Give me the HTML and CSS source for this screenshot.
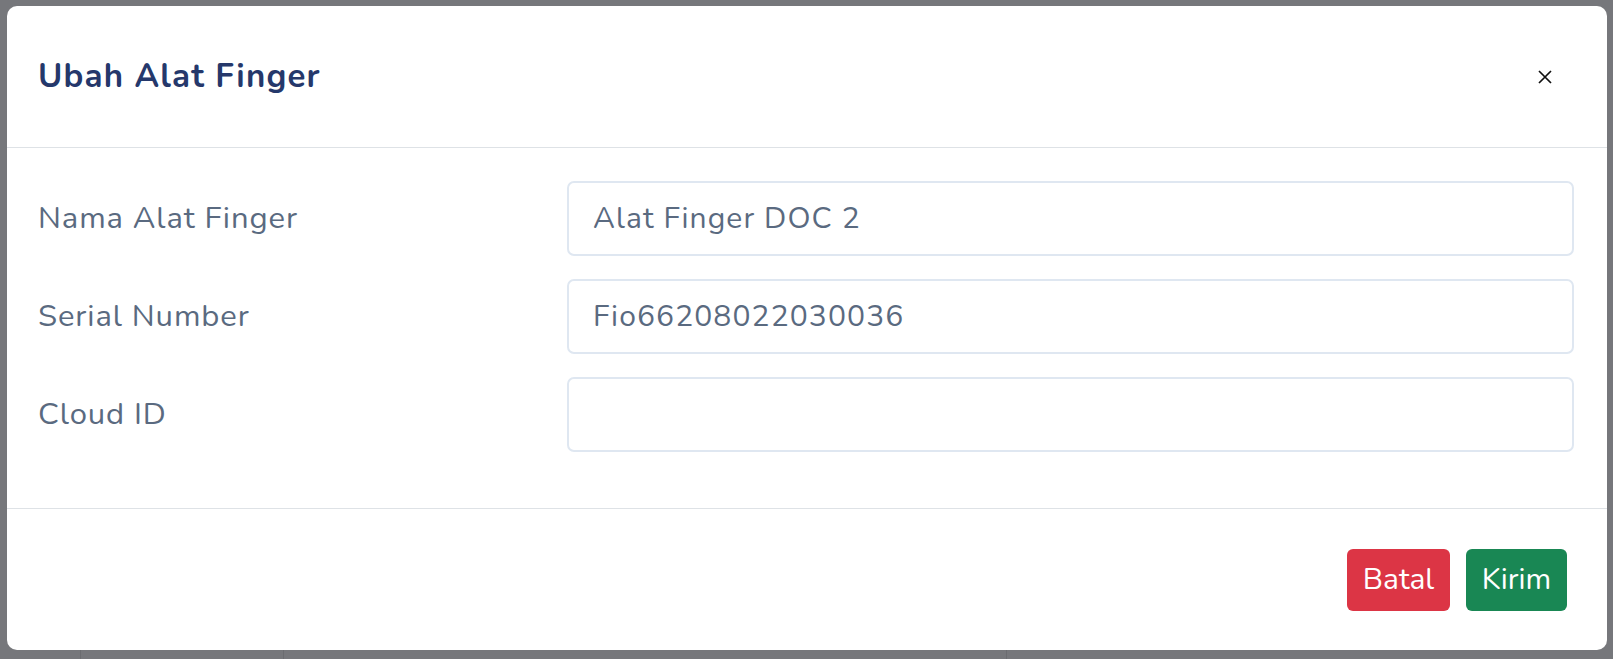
FILE: index.html
```html
<!DOCTYPE html>
<html lang="id">
<head>
<meta charset="utf-8">
<title>Ubah Alat Finger</title>
<link rel="stylesheet" href="styles.css">
</head>
<body>
<div class="backdrop">
  <div class="modal">
    <div class="modal-header">
      <h5 class="modal-title">Ubah Alat Finger</h5>
      <button class="close" type="button" aria-label="Close">
        <svg width="14" height="14" viewBox="0 0 14 14"><path d="M1 1L13 13M13 1L1 13" stroke="#111" stroke-width="1.7" fill="none"/></svg>
      </button>
    </div>
    <div class="modal-body">
      <div class="form-row">
        <label class="form-label">Nama Alat Finger</label>
        <input class="form-control" type="text" value="Alat Finger DOC 2">
      </div>
      <div class="form-row">
        <label class="form-label">Serial Number</label>
        <input class="form-control" type="text" value="Fio66208022030036">
      </div>
      <div class="form-row">
        <label class="form-label">Cloud ID</label>
        <input class="form-control" type="text" value="">
      </div>
    </div>
    <div class="modal-footer">
      <button class="btn btn-danger" type="button">Batal</button>
      <button class="btn btn-success" type="button">Kirim</button>
    </div>
  </div>
  <div class="under">
    <div class="under-cell c1"></div>
    <div class="under-cell c2"></div>
    <div class="under-cell c3"></div>
    <div class="under-cell c4"></div>
  </div>
</div>
</body>
</html>
```

FILE: styles.css
```css
* { box-sizing: border-box; }
html, body { margin: 0; padding: 0; }
body {
  background: #76777b;
  font-family: "Nunito", "Lato", "Noto Sans", sans-serif;
  width: 1613px;
  height: 659px;
  overflow: hidden;
}
.backdrop {
  padding: 6px 6px 0 7px;
}
.modal {
  width: 1600px;
  height: 644px;
  background: #fff;
  border-radius: 10px;
  display: flex;
  flex-direction: column;
}
.modal-header {
  height: 142px;
  border-bottom: 1px solid #dee2e6;
  display: flex;
  align-items: center;
  justify-content: space-between;
  padding: 0 55px 0 31px;
}
.modal-title {
  margin: 0;
  font-size: 33px;
  font-weight: 700;
  color: #25386b;
  letter-spacing: 1.2px;
  line-height: 1;
}
.close {
  border: 0;
  background: transparent;
  padding: 0;
  width: 14px;
  height: 14px;
  display: flex;
  margin-top: 0;
}
.modal-body {
  padding: 33px 33px 33px 31px;
  border-bottom: 1px solid #dee2e6;
}
.form-row {
  display: grid;
  grid-template-columns: 529px 1fr;
  align-items: center;
  margin-bottom: 23px;
}
.form-label {
  font-size: 31px;
  letter-spacing: 0.9px;
  color: #5a6a80;
  line-height: 1;
}
.form-control {
  height: 75px;
  width: 100%;
  border: 2px solid #dfe7f1;
  border-radius: 7px;
  padding: 0 24px;
  font-family: inherit;
  font-size: 30px;
  letter-spacing: 1.1px;
  color: #5a6a80;
  background: #fff;
  outline: none;
}
.modal-footer {
  flex: 1;
  display: flex;
  align-items: center;
  justify-content: flex-end;
  gap: 16px;
  padding: 0 40px 0 0;
}
.btn {
  height: 62px;
  border: 0;
  border-radius: 6px;
  padding: 0;
  font-family: inherit;
  font-size: 30px;
  color: #fff;
  line-height: 1;
}
.btn-danger { background: #dc3545; width: 103px; }
.btn-success { background: #198754; width: 101px; }
.under {
  display: grid;
  grid-template-columns: 73px 203px 723px 1fr;
  height: 9px;
}
.under-cell { border-left: 1px solid #6b6c70; }
.under-cell.c1 { border-left: 0; }
```
